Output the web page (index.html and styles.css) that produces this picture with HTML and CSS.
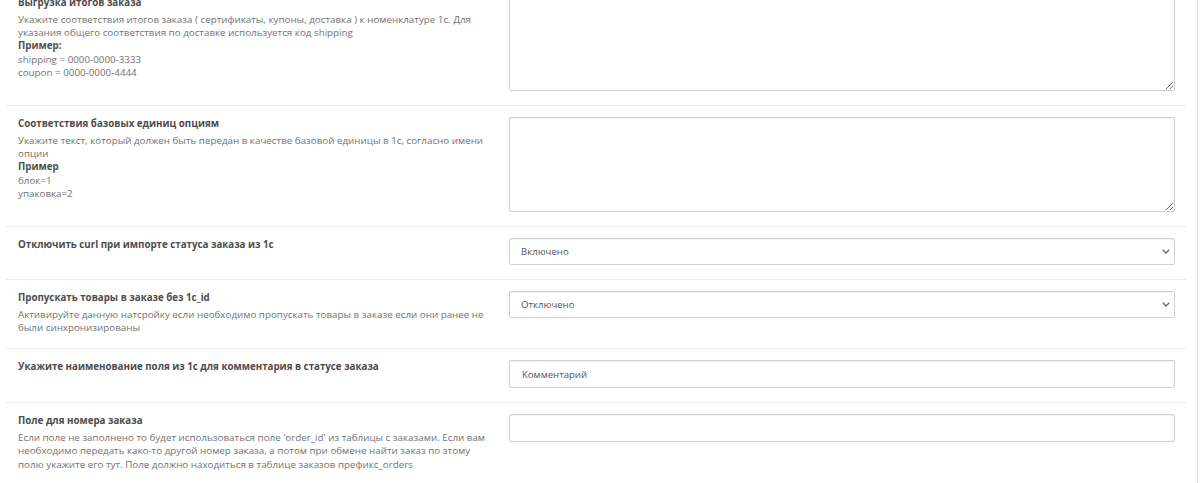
FILE: index.html
```html
<!DOCTYPE html>
<html lang="ru">
<head>
    <meta charset="UTF-8">
    <meta name="viewport" content="width=device-width, initial-scale=1.0">
    <title>Настройки обмена с 1С</title>
    <link rel="stylesheet" href="styles.css">
</head>
<body>
    <div class="panel">
        <div class="form-group first">
            <div class="control-label">
                <div class="title">Выгрузка итогов заказа</div>
                <div class="help">
                    Укажите соответствия итогов заказа ( сертификаты, купоны, доставка ) к номенклатуре 1с. Для указания общего соответствия по доставке используется код shipping<br>
                    <b>Пример:</b><br>
                    shipping = 0000-0000-3333<br>
                    coupon = 0000-0000-4444
                </div>
            </div>
            <div class="control">
                <textarea class="form-control" name="totals"></textarea>
            </div>
        </div>

        <div class="form-group">
            <div class="control-label">
                <div class="title">Соответствия базовых единиц опциям</div>
                <div class="help">
                    Укажите текст, который должен быть передан в качестве базовой единицы в 1с, согласно имени опции<br>
                    <b>Пример</b><br>
                    блок=1<br>
                    упаковка=2
                </div>
            </div>
            <div class="control">
                <textarea class="form-control" name="units"></textarea>
            </div>
        </div>

        <div class="form-group">
            <div class="control-label">
                <div class="title">Отключить curl при импорте статуса заказа из 1с</div>
            </div>
            <div class="control select-wrap">
                <select class="form-control" name="curl">
                    <option selected>Включено</option>
                    <option>Отключено</option>
                </select>
                <svg class="caret" width="8" height="5" viewBox="0 0 8 5"><path d="M0.8 0.8 L4 4 L7.2 0.8" fill="none" stroke="#6b6b6b" stroke-width="1.4"/></svg>
            </div>
        </div>

        <div class="form-group">
            <div class="control-label">
                <div class="title">Пропускать товары в заказе без 1c_id</div>
                <div class="help">Активируйте данную натсройку если необходимо пропускать товары в заказе если они ранее не были синхронизированы</div>
            </div>
            <div class="control select-wrap">
                <select class="form-control" name="skip">
                    <option>Включено</option>
                    <option selected>Отключено</option>
                </select>
                <svg class="caret" width="8" height="5" viewBox="0 0 8 5"><path d="M0.8 0.8 L4 4 L7.2 0.8" fill="none" stroke="#6b6b6b" stroke-width="1.4"/></svg>
            </div>
        </div>

        <div class="form-group">
            <div class="control-label">
                <div class="title">Укажите наименование поля из 1с для комментария в статусе заказа</div>
            </div>
            <div class="control">
                <input type="text" class="form-control" name="comment" value="Комментарий">
            </div>
        </div>

        <div class="form-group">
            <div class="control-label">
                <div class="title">Поле для номера заказа</div>
                <div class="help">Если поле не заполнено то будет использоваться поле 'order_id' из таблицы с заказами. Если вам необходимо передать како-то другой номер заказа, а потом при обмене найти заказ по этому полю укажите его тут. Поле должно находиться в таблице заказов префикс_orders</div>
            </div>
            <div class="control">
                <input type="text" class="form-control" name="order_field" value="">
            </div>
        </div>
    </div>
</body>
</html>
```

FILE: styles.css
```css
body {
    margin: 0;
    font-family: "Open Sans", "Noto Sans", sans-serif;
    font-size: 9.6px;
    line-height: 1.42857;
    color: #666;
    background-color: #fff;
    overflow: hidden;
}

.panel {
    width: 1180px;
    margin-top: -15px;
    padding: 0 11px 60px 6px;
    border-right: 1px solid #e2e2e2;
}

.form-group {
    display: grid;
    grid-template-columns: 491px 666px;
    padding: 11px 11px 14px 12px;
    border-top: 1px solid #ededed;
}

.form-group.first {
    border-top: none;
}

.control-label {
    padding-right: 18px;
}

.title {
    font-size: 9.75px;
    font-weight: bold;
    color: #4d4d4d;
}

.help {
    margin-top: 3px;
    font-size: 9.8px;
    line-height: 13.2px;
    color: #737373;
}

.help b {
    color: #4f4f4f;
}

.form-control {
    display: block;
    width: 100%;
    box-sizing: border-box;
    height: 28px;
    padding: 4px 10px 4px 12px;
    font-family: "Open Sans", "Noto Sans", sans-serif;
    font-size: 9.6px;
    color: #555;
    background-color: #fff;
    border: 1px solid #d0d0d0;
    border-radius: 2px;
    box-shadow: inset 0 1px 1px rgba(0, 0, 0, 0.06);
}

textarea.form-control {
    height: 95px;
    resize: vertical;
}

.select-wrap {
    position: relative;
}

select.form-control {
    height: 27px;
    padding-left: 11px;
    appearance: none;
    -webkit-appearance: none;
}

.caret {
    position: absolute;
    right: 5px;
    top: 11px;
}
```
